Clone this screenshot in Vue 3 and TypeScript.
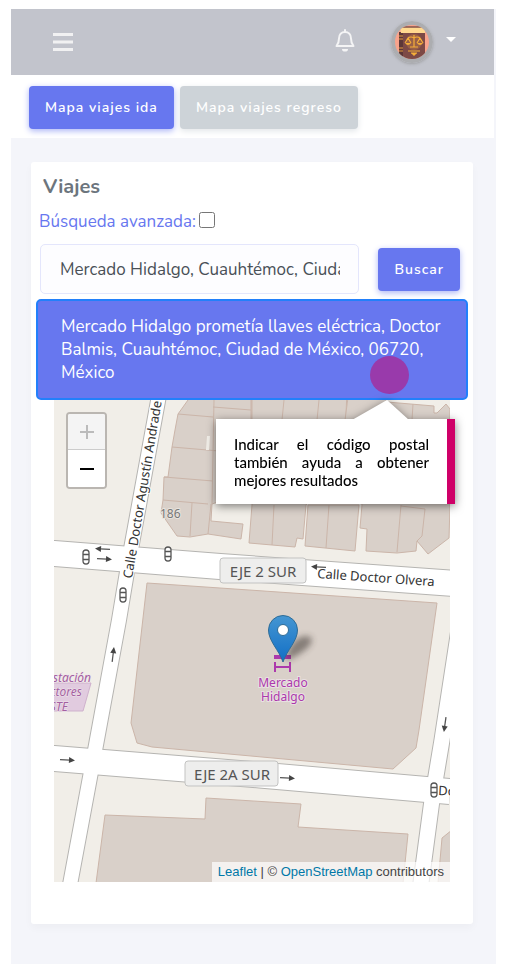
<script setup lang="ts">
import { ref } from 'vue'

type Tab = 'ida' | 'regreso'

const tab = ref<Tab>('ida')
const advanced = ref(false)
const query = ref('Mercado Hidalgo, Cuauhtémoc, Ciudad de México')
const suggestions = ref<string[]>([
  'Mercado Hidalgo prometía llaves eléctrica, Doctor Balmis, Cuauhtémoc, Ciudad de México, 06720, México',
])

const blocks: string[] = [
  'M188 390 188 400 178 414 175 430 172 447 168 477 164 477 163 500 161 513 177 536 190 537 208 534 241 539 243 524 211 521 212 504 252 490 252 390Z',
  'M252 390 252 505 249 543 295 547 297 538 303 539 306 505 345 440 347 390Z',
  'M308 505 305 546 355 551 359 505Z',
  'M349 390 345 420 362 505 360 528 367 529 366 551 397 553 416 551 417 541 428 554 449 538 450 505 450 409 446 404 437 413 434 413 434 406 387 402 380 390Z',
]

const lots: string[] = [
  'M178 414 213 417 M172 447 219 451 M164 477 213 481 M163 500 208 504 M192 503 190 536 M211 504 208 534 M214 400 212 504',
  'M213 407 251 410 M251 400 251 420 M284 400 282 420 M319 400 317 420 M274 505 272 545 M329 505 326 548',
  'M413 404 412 420 M401 505 397 552 M425 509 422 536 417 541 M401 506 425 509',
]

const signals = [
  { x: 86, y: 557 },
  { x: 168, y: 554 },
  { x: 123, y: 595 },
  { x: 434, y: 790 },
]

const arrows = [
  { x: 103, y: 549, turn: 183 },
  { x: 104, y: 559, turn: 3 },
  { x: 319, y: 567, turn: 183 },
  { x: 113, y: 655, turn: -83 },
  { x: 67, y: 760, turn: 3 },
  { x: 287, y: 778, turn: 3 },
  { x: 445, y: 724, turn: 98 },
]
</script>

<template>
  <div class="page">
    <header class="topbar">
      <button class="plain" type="button" aria-label="Menú">
        <svg width="20" height="18" viewBox="0 0 20 18">
          <path d="M0 1.6H20M0 9H20M0 16.4H20" stroke="#f1f1f2" stroke-width="3" />
        </svg>
      </button>
      <span class="spacer"></span>
      <button class="plain bell" type="button" aria-label="Notificaciones">
        <svg width="20" height="23" viewBox="0 0 20 23">
          <path d="M10 1v2M1.500 17h17C16.500 14.500 16 13 16 9.500 16 5.500 13.500 3 10 3S4 5.500 4 9.500C4 13 3.500 14.500 1.500 17Z" fill="none" stroke="#f4f4f5" stroke-width="2" stroke-linejoin="round" stroke-linecap="round" />
          <path d="M7 20h6a3 2.600 0 0 1-6 0Z" fill="#f4f4f5" />
        </svg>
      </button>
      <button class="plain account" type="button" aria-label="Cuenta">
        <svg class="avatar" width="42" height="42" viewBox="0 0 42 42">
          <defs><clipPath id="face"><circle cx="21" cy="21" r="17" /></clipPath></defs>
          <circle cx="21" cy="21" r="21" fill="#acadb0" />
          <g clip-path="url(#face)">
            <path d="M0 0h42v42H0z" fill="#f9a38c" />
            <path d="M8 11h26v30H8z" fill="#7d4a46" />
            <path d="M8 11h4v30H8z" fill="#5c3738" />
            <path d="M8 15h4M8 18h4M8 27h4M8 30h4" stroke="#b5793c" stroke-width="1.500" />
            <path d="M9 6h25v6H10z" fill="#ffd98f" />
            <path d="M8 6h26" stroke="#83514b" stroke-width="1.500" />
            <circle cx="23" cy="21" r="8" fill="#996147" />
            <path d="M23 14v12M17 17q3-2 6 0 3-2 6 0M17 17l-3 5M17 17l3 5M29 17l-3 5M29 17l3 5M19 26h8M17 30h12M20 32h6" fill="none" stroke="#f5ae39" stroke-width="1.200" />
            <path d="M14 22h6q-3 4-6 0M26 22h6q-3 4-6 0M20 32h6l-3 3z" fill="#f5ae39" />
          </g>
        </svg>
        <svg class="caret" width="10" height="5" viewBox="0 0 10 5"><path d="M0 0h10L5 5z" fill="#fff" /></svg>
      </button>
    </header>

    <nav class="tabs">
      <button class="btn" :class="{ muted: tab !== 'ida' }" type="button" @click="tab = 'ida'">Mapa viajes ida</button>
      <button class="btn" :class="{ muted: tab !== 'regreso' }" type="button" @click="tab = 'regreso'">Mapa viajes regreso</button>
    </nav>

    <main class="card">
      <h1>Viajes</h1>
      <div class="advanced">
        <label for="advanced">Búsqueda avanzada:</label>
        <input id="advanced" v-model="advanced" type="checkbox" />
      </div>
      <form class="search" @submit.prevent>
        <input v-model="query" type="text" aria-label="Dirección" />
        <button class="btn" type="submit">Buscar</button>
      </form>

      <div class="results">
        <button v-for="item in suggestions" :key="item" class="result" type="button">{{ item }}</button>
        <span class="pointer"></span>
      </div>

      <section class="map">
        <svg class="tiles" viewBox="54 400 396 482" preserveAspectRatio="xMidYMid slice">
          <defs>
            <linearGradient id="pin" x1="0" y1="0" x2="0" y2="1">
              <stop offset="0" stop-color="#4596d2" />
              <stop offset="1" stop-color="#126fc6" />
            </linearGradient>
            <filter id="soft" x="-50%" y="-50%" width="200%" height="200%"><feGaussianBlur stdDeviation="3" /></filter>
          </defs>
          <path d="M0 300h600v700H0z" fill="#f1eee8" />
          <g class="building">
            <path v-for="d in blocks" :key="d" :d="d" />
            <path d="M147 583 220 588 437 603 419 730 416 748 393 769 240 755 152 747 137 743 131 723Z" />
            <path d="M96 883 105 815 205 819 206 798 301 804 298 827 408 834 403 883Z" />
            <path d="M438 883 442 838 452 830 452 883Z" />
            <path v-for="d in lots" :key="d" :d="d" class="lot" />
          </g>
          <path d="M207 436h3l-1 14h-3z" fill="#f1eee8" />

          <g class="casing">
            <path d="M0 549.500 54 553.500 220 566.500 455 583.500" stroke-width="27" />
            <path d="M0 755 54 758.500 260 775 450 791.500" stroke-width="27" />
            <path d="M160 390 129 560 119 620 96 745 69 890" stroke-width="16" />
            <path d="M465 590 442 740 432 800 420 890" stroke-width="17" />
          </g>
          <g class="road">
            <path d="M0 549.500 54 553.500 220 566.500 455 583.500" stroke-width="25" />
            <path d="M0 755 54 758.500 260 775 450 791.500" stroke-width="25" />
            <path d="M160 390 129 560 119 620 96 745 69 890" stroke-width="14" />
            <path d="M465 590 442 740 432 800 420 890" stroke-width="15" />
          </g>

          <path d="M50 683H91L83 711H50Z" fill="#e1cbdf" stroke="#cfb1cd" />
          <g class="station">
            <text x="91" y="682" text-anchor="end">Estación</text>
            <text x="82" y="696" text-anchor="end">Doctores</text>
            <text x="68" y="711" text-anchor="end">ISSSTE</text>
          </g>

          <text class="street" transform="translate(132 579) rotate(-80.500)">Calle Doctor Agustín Andrade</text>
          <text class="street" transform="translate(317 578) rotate(4)">Calle Doctor Olvera</text>
          <text class="street" transform="translate(438 795) rotate(3)">Doctor</text>
          <text class="number" x="160" y="518">186</text>

          <g class="shield">
            <rect x="220" y="558" width="86" height="25" rx="3" />
            <text x="263" y="577" text-anchor="middle">EJE 2 SUR</text>
            <rect x="185" y="761" width="93" height="25" rx="3" />
            <text x="232" y="780" text-anchor="middle">EJE 2A SUR</text>
          </g>

          <g v-for="s in signals" :key="`${s.x}-${s.y}`" :transform="`translate(${s.x} ${s.y})`">
            <rect x="-3" y="-7" width="6" height="14" rx="3" fill="#fff" stroke="#555" stroke-width="1.300" />
            <path d="M-3 -2.500h6M-3 2.500h6" stroke="#555" stroke-width="1.600" />
          </g>
          <g v-for="a in arrows" :key="`${a.x}-${a.y}`" :transform="`translate(${a.x} ${a.y}) rotate(${a.turn})`">
            <path d="M-7 0H3" stroke="#555" stroke-width="1.300" />
            <path d="M2 -3 8 0 2 3Z" fill="#444" />
          </g>

          <path d="M274 655h17v4h-17zM275 663v9M290 663v9M275 667h15" fill="#ac39ac" />
          <path d="M275 662v10M290 662v10M275 667h15" stroke="#ac39ac" stroke-width="2" />
          <g class="market">
            <text x="283" y="687" text-anchor="middle">Mercado</text>
            <text x="283" y="701" text-anchor="middle">Hidalgo</text>
          </g>
          <path d="M286 661C286 648 296 636 306 636S315 648 286 661Z" fill="#332c27" opacity=".5" filter="url(#soft)" />
          <path d="M283 662C279 650 268.500 641 268.500 630A14.500 14.500 0 0 1 297.500 630C297.500 641 287 650 283 662Z" fill="url(#pin)" stroke="#2e6c97" />
          <circle cx="283" cy="630" r="5.500" fill="#fff" stroke="#2e6c97" />
        </svg>

        <div class="zoom">
          <button type="button" aria-label="Acercar" disabled>
            <svg width="16" height="16" viewBox="0 0 16 16"><path d="M1 8h14M8 1v14" stroke="#bbb" stroke-width="2" /></svg>
          </button>
          <button type="button" aria-label="Alejar">
            <svg width="16" height="16" viewBox="0 0 16 16"><path d="M1 8h14" stroke="#000" stroke-width="2" /></svg>
          </button>
        </div>

        <div class="hint" role="note">
          <svg class="tip" width="57" height="20" viewBox="0 0 57 20"><path d="M0 20 35 0 57 20Z" fill="#fff" /></svg>
          Indicar el código postal también ayuda a obtener mejores resultados
        </div>

        <footer class="credit">
          <a href="#leaflet">Leaflet</a> | © <a href="#osm">OpenStreetMap</a> contributors
        </footer>
      </section>
    </main>
  </div>
</template>

<style>
body {
  background: #fff;
}
</style>

<style scoped>
* {
  box-sizing: border-box;
}
.page {
  margin: 9px 10px 0 11px;
  padding: 0 2px 40px 0;
  background: #f4f5fa;
  color: #495057;
  font-family: Nunito, Lato, sans-serif;
}
button {
  font-family: inherit;
  cursor: pointer;
}
.topbar {
  display: flex;
  align-items: center;
  height: 66px;
  padding: 0 38px 0 42px;
  background: #c2c4cc;
}
.spacer {
  flex: 1;
}
.plain {
  display: flex;
  padding: 0;
  border: 0;
  background: none;
}
.bell {
  margin: 0 36px 4px 0;
}
.account {
  align-items: center;
  gap: 13px;
}
.avatar {
  border-radius: 50%;
  box-shadow: 0 1px 3px #8889;
}
.caret {
  margin-bottom: 6px;
}
.tabs {
  display: flex;
  gap: 6px;
  height: 63px;
  padding: 11px 18px;
  background: #fff;
}
.btn {
  height: 43px;
  padding: 0 16px;
  border: 0;
  border-radius: 4px;
  background: #6777ef;
  box-shadow: 0 2px 6px #acb5f6;
  color: #fff;
  font-size: 14px;
  font-weight: 600;
  letter-spacing: 1px;
  white-space: nowrap;
}
.btn.muted {
  background: #cdd3d8;
  box-shadow: 0 2px 6px #e1e5e8;
}
.card {
  margin: 24px 21px 0 20px;
  padding: 13px 0 42px;
  border-radius: 3px;
  background: #fff;
  box-shadow: 0 4px 8px rgba(0, 0, 0, 0.03);
}
h1 {
  margin: 0 12px;
  color: #6c757d;
  font-size: 20px;
  font-weight: 700;
  line-height: 24px;
}
.advanced {
  display: flex;
  align-items: center;
  gap: 3px;
  margin: 9px 9px 0 8px;
  color: #6777ef;
  font-size: 17px;
  line-height: 28px;
}
.advanced input {
  width: 16px;
  height: 16px;
  margin: 0 0 5px;
}
.search {
  display: flex;
  align-items: center;
  gap: 19px;
  margin: 8px 13px 0 9px;
}
.search input {
  flex: 1;
  min-width: 0;
  height: 50px;
  padding: 0 18px 0 19px;
  border: 1px solid #e4e6fc;
  border-radius: 5px;
  background: #fdfdff;
  color: #495057;
  font-family: inherit;
  font-size: 17px;
}
.results {
  position: relative;
  margin: 5px 5px 0;
}
.result {
  display: block;
  width: 100%;
  padding: 14px 23px;
  border: 2px solid #2280fb;
  border-radius: 5px;
  background: #6777ef;
  color: #fff;
  font-size: 17px;
  line-height: 23px;
  text-align: left;
}
.pointer {
  position: absolute;
  right: 59px;
  bottom: 6px;
  width: 39px;
  height: 38px;
  border-radius: 50%;
  background: #993aab;
}
.map {
  position: relative;
  margin: 0 23px;
}
.tiles {
  display: block;
  width: 100%;
  height: 482px;
  font-family: "Noto Sans", sans-serif;
}
.building {
  fill: #d9d0c9;
  stroke: #cbb5a9;
  stroke-width: 1;
}
.lot {
  fill: none;
}
.casing {
  fill: none;
  stroke: #b5b4b1;
}
.road {
  fill: none;
  stroke: #fff;
}
.street,
.number {
  fill: #333;
  font-size: 13px;
  paint-order: stroke;
  stroke: #fff;
  stroke-width: 2px;
}
.number {
  fill: #777;
  font-size: 12px;
  stroke: #e8e3dd;
}
.shield rect {
  fill: #eeeeed;
  stroke: #c3c3c2;
  stroke-width: 1;
}
.shield text {
  fill: #555;
  font-size: 15px;
}
.station {
  fill: #a45fa1;
  font-size: 12px;
  font-style: italic;
  paint-order: stroke;
  stroke: #f0e6ec;
  stroke-width: 1px;
}
.market {
  fill: #ac39ac;
  font-size: 12px;
  paint-order: stroke;
  stroke: #e9e0e2;
  stroke-width: 2px;
}
.zoom {
  position: absolute;
  top: 12px;
  left: 12px;
  width: 41px;
  overflow: hidden;
  border: 2px solid #bab6b1;
  border-radius: 4px;
  background: #fff;
}
.zoom button {
  display: flex;
  align-items: center;
  justify-content: center;
  width: 100%;
  height: 37px;
  padding: 0;
  border: 0;
  background: #fff;
}
.zoom button:disabled {
  height: 36px;
  border-bottom: 1px solid #ccc;
  background: #f4f4f4;
}
.hint {
  position: absolute;
  top: 19px;
  right: -5px;
  width: 239px;
  padding: 16px 18px 15px;
  border-right: 8px solid #cf0068;
  background: #fff;
  color: #000;
  filter: drop-shadow(0 2px 5px rgba(0, 0, 0, 0.5));
  font-family: Lato, "Noto Sans", sans-serif;
  font-size: 15px;
  font-weight: 500;
  line-height: 18px;
  text-align: justify;
}
.tip {
  position: absolute;
  top: -19px;
  right: 38px;
}
.credit {
  position: absolute;
  right: 0;
  bottom: 0;
  padding: 0 6px;
  background: rgba(255, 255, 255, 0.7);
  color: #444;
  font-family: "Liberation Sans", sans-serif;
  font-size: 13px;
  line-height: 20px;
}
.credit a {
  color: #0078a8;
  text-decoration: none;
}
</style>
